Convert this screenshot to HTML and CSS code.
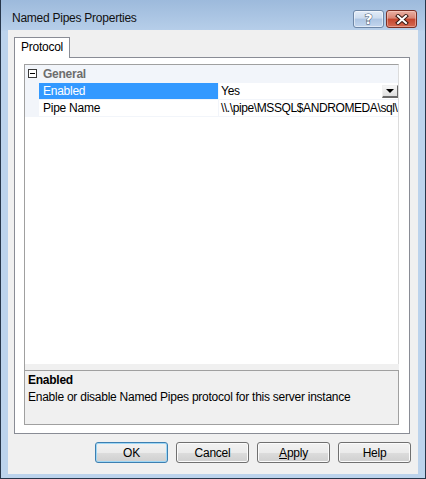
FILE: index.html
```html
<!DOCTYPE html>
<html>
<head>
<meta charset="utf-8">
<link rel="stylesheet" href="styles.css">
</head>
<body>
<div class="window">
  <div class="titlebar">
    <span class="title">Named Pipes Properties</span>
    <div class="caption">
      <div class="cap-btn help"><span class="qmark">?</span></div>
      <div class="cap-btn close">
        <svg width="14" height="11" viewBox="0 0 14 11">
          <path d="M3 2 L11 9 M11 2 L3 9" stroke="#3a1a14" stroke-width="4" stroke-linecap="square" fill="none"/>
          <path d="M3 2 L11 9 M11 2 L3 9" stroke="#ffffff" stroke-width="2" stroke-linecap="square" fill="none"/>
        </svg>
      </div>
    </div>
  </div>
  <div class="client">
    <div class="tabs"><div class="tab">Protocol</div></div>
    <div class="panel">
      <div class="pgrid">
        <div class="props">
          <div class="row cat">
            <span class="gutter"><span class="expander"></span></span>
            <span class="cat-label">General</span>
          </div>
          <div class="row prop">
            <span class="gutter"></span>
            <span class="name selected">Enabled</span>
            <span class="value">Yes<span class="dd"><span class="tri"></span></span></span>
          </div>
          <div class="row prop">
            <span class="gutter"></span>
            <span class="name">Pipe Name</span>
            <span class="value tight">\\.\pipe\MSSQL$ANDROMEDA\sql\</span>
          </div>
        </div>
        <div class="desc">
          <div class="desc-title">Enabled</div>
          <div class="desc-text">Enable or disable Named Pipes protocol for this server instance</div>
        </div>
      </div>
    </div>
    <div class="buttons">
      <button class="btn default">OK</button>
      <button class="btn">Cancel</button>
      <button class="btn"><u>A</u>pply</button>
      <button class="btn">Help</button>
    </div>
  </div>
</div>
</body>
</html>
```

FILE: styles.css
```css
* { box-sizing: border-box; }
html, body { margin: 0; padding: 0; }
body {
  width: 426px;
  height: 479px;
  overflow: hidden;
  font-family: "Liberation Sans", Arial, sans-serif;
  font-size: 12px;
  letter-spacing: -0.25px;
  color: #000;
  background: #bcd3ec;
}
.window {
  width: 426px;
  height: 479px;
  border: 1px solid #27364a;
  border-top: none;
  padding: 0 7px 4px 7px;
  background: linear-gradient(to bottom, #9dbadc 0px, #b6cee9 30px, #bcd3ec 31px, #bcd3ec 100%);
  display: flex;
  flex-direction: column;
}
.titlebar {
  height: 30px;
  flex: none;
  display: flex;
  align-items: flex-start;
}
.title {
  padding-left: 4px;
  padding-top: 11px;
  line-height: 15px;
  color: #111;
}
.caption {
  margin-left: auto;
  margin-right: 1px;
  margin-top: 10px;
  display: flex;
  gap: 2px;
}
.cap-btn {
  height: 18px;
  width: 31px;
  border-radius: 3px;
  display: flex;
  align-items: center;
  justify-content: center;
}
.help {
  border: 1px solid #6d86a6;
  background: linear-gradient(to bottom, #e2ecf8 0%, #cddcef 45%, #adc5e3 50%, #c3d6ee 100%);
  box-shadow: inset 0 0 0 1px rgba(255,255,255,0.5);
}
.qmark {
  font-family: "DejaVu Sans", sans-serif;
  font-weight: bold;
  font-size: 14px;
  line-height: 14px;
  letter-spacing: 0;
  color: #fff;
  -webkit-text-stroke: 1px #44556b;
  paint-order: stroke fill;
}
.close {
  border: 1px solid #7a2f24;
  background: linear-gradient(to bottom, #eab1a4 0%, #d98473 45%, #c4452d 50%, #d56a52 100%);
  box-shadow: inset 0 0 0 1px rgba(255,220,210,0.45);
}
.client {
  flex: 1;
  background: #f0f0f0;
  padding: 7px 8px 0 6px;
  display: flex;
  flex-direction: column;
}
.tabs { display: flex; flex: none; }
.tab {
  width: 56px;
  height: 21px;
  border: 1px solid #898c95;
  border-bottom: none;
  background: #fff;
  margin-bottom: -1px;
  position: relative;
  z-index: 1;
  padding-left: 6px;
  line-height: 19px;
}
.panel {
  height: 377px;
  flex: none;
  border: 1px solid #898c95;
  background: #fff;
  padding: 6px 10px 8px 9px;
  display: flex;
  flex-direction: column;
}
.pgrid {
  flex: 1;
  display: flex;
  flex-direction: column;
  background: #f0f0f0;
  border-left: 1px solid #a0a0a0;
}
.props {
  height: 300px;
  flex: none;
  background: #fff;
  border-top: 1px solid #a0a0a0;
  border-right: 1px solid #dcdcdc;
}
.row { display: flex; }
.gutter {
  width: 14px;
  flex: none;
  background: #f2f5fa;
  position: relative;
}
.cat {
  height: 18px;
  background: #f2f5fa;
}
.expander {
  position: absolute;
  left: 3px;
  top: 4px;
  width: 9px;
  height: 9px;
  border: 1px solid #3a3a3a;
  background: #fff;
}
.expander::after {
  content: "";
  position: absolute;
  left: 1px;
  top: 3px;
  width: 5px;
  height: 1px;
  background: #000;
}
.cat-label {
  padding-left: 4px;
  font-weight: bold;
  color: #6d6d6d;
  line-height: 18px;
}
.prop {
  height: 17px;
  border-bottom: 1px solid #f2f5fa;
}
.name {
  width: 180px;
  flex: none;
  padding-left: 4px;
  border-right: 1px solid #f2f5fa;
  line-height: 16px;
}
.name.selected {
  background: #3399ff;
  color: #fff;
}
.value {
  flex: 1;
  padding-left: 2px;
  line-height: 16px;
  white-space: nowrap;
  overflow: hidden;
  position: relative;
}
.value.tight { letter-spacing: -0.4px; }
.dd {
  position: absolute;
  right: 0;
  top: 2px;
  width: 16px;
  height: 13px;
  background: linear-gradient(to bottom, #f6f6f6, #dedede);
  border-top: 1px solid #f0f0f0;
  border-left: 1px solid #f0f0f0;
  border-right: 1px solid #696969;
  border-bottom: 2px solid #696969;
  display: flex;
  align-items: center;
  justify-content: center;
}
.tri {
  width: 0;
  height: 0;
  border-left: 4px solid transparent;
  border-right: 4px solid transparent;
  border-top: 4px solid #000;
}
.desc {
  margin-top: 6px;
  height: 55px;
  flex: none;
  border: 1px solid #a0a0a0;
  border-left: none;
  padding: 1px 3px 0 3px;
  line-height: 16px;
  background: #f0f0f0;
}
.desc-title { font-weight: bold; }
.desc-text { margin-top: 1px; }
.buttons {
  display: flex;
  justify-content: flex-end;
  gap: 8px;
  margin-top: 8px;
  margin-right: -1px;
}
.btn {
  width: 73px;
  height: 21px;
  border: 1px solid #707070;
  border-radius: 3px;
  background: linear-gradient(to bottom, #f2f2f2 0%, #ebebeb 50%, #dddddd 50%, #cfcfcf 100%);
  box-shadow: inset 0 0 0 1px #fbfbfb;
  font-family: inherit;
  font-size: 12px;
  letter-spacing: -0.25px;
  color: #000;
  padding: 0;
  line-height: 18px;
}
.btn.default {
  border-color: #3c7fb1;
  box-shadow: inset 0 0 0 1px #9fd7f5;
}
```
